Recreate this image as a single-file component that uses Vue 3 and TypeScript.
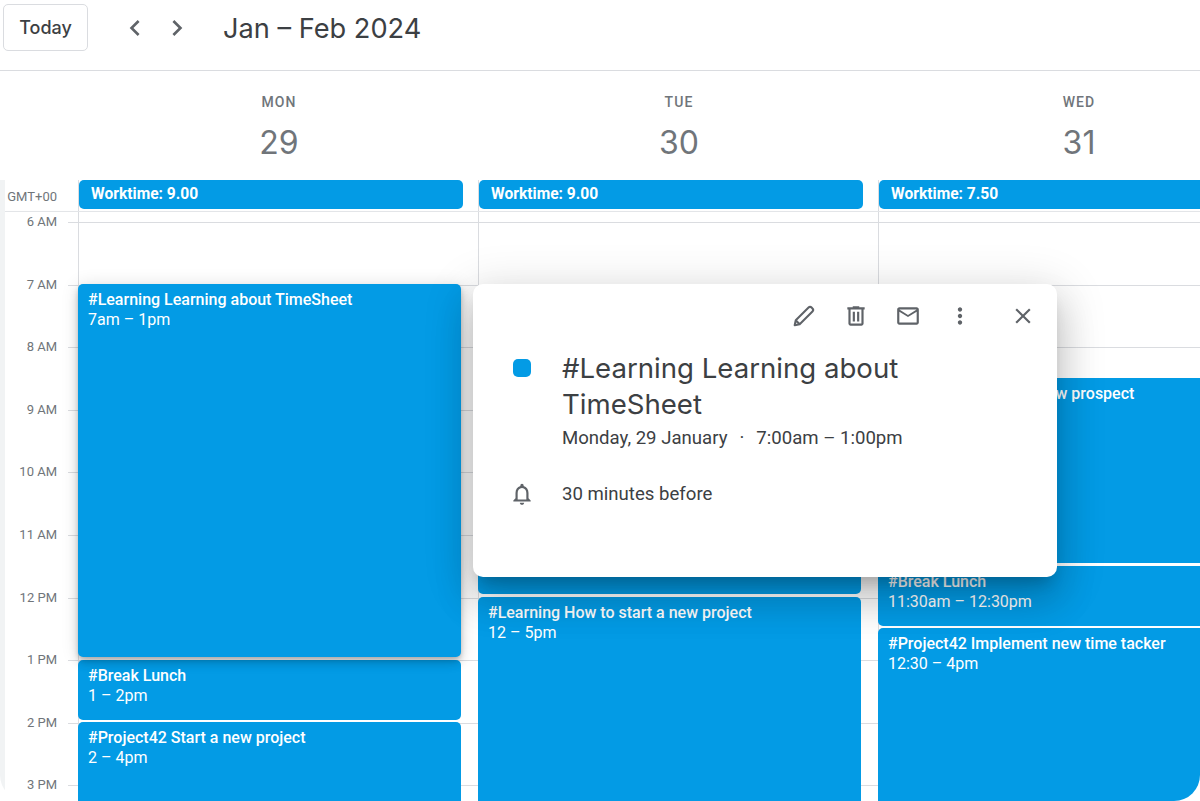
<script setup lang="ts">
interface CalEvent { title: string; time: string; top: number; height: number }
interface Day { name: string; num: number; work: string; events: CalEvent[]; }

const hourH = 62.6
const hours = ['6 AM','7 AM','8 AM','9 AM','10 AM','11 AM','12 PM','1 PM','2 PM','3 PM']
const y = (h: number) => (h - 6) * hourH + 10 - 0.6
const ev = (title: string, time: string, from: number, to: number): CalEvent => ({
  title, time, top: y(from), height: (to - from) * hourH - 2.6,
})
const days: Day[] = [
  { name: 'MON', num: 29, work: 'Worktime: 9.00', events: [
    ev('#Break Lunch', '1 – 2pm', 13, 14),
    ev('#Project42 Start a new project', '2 – 4pm', 14, 16),
  ] },
  { name: 'TUE', num: 30, work: 'Worktime: 9.00', events: [
    ev('', '', 9, 12),
    ev('#Learning How to start a new project', '12 – 5pm', 12, 17),
  ] },
  { name: 'WED', num: 31, work: 'Worktime: 7.50', events: [
    ev('#Project42 Meet the new prospect', '8:30 – 11:30am', 8.5, 11.5),
    ev('#Break Lunch', '11:30am – 12:30pm', 11.5, 12.5),
    ev('#Project42 Implement new time tacker', '12:30 – 4pm', 12.5, 16),
  ] },
]
const selected = ev('#Learning Learning about TimeSheet', '7am – 1pm', 7, 13)
const px = (n: number) => `${n}px`
</script>

<template>
  <div class="page">
    <header class="toolbar">
      <button class="today">Today</button>
      <div class="nav">
        <svg viewBox="0 0 24 24" class="chev"><path d="M15.41 7.41L14 6l-6 6 6 6 1.41-1.41L10.83 12z"/></svg>
        <svg viewBox="0 0 24 24" class="chev"><path d="M8.59 16.59L10 18l6-6-6-6-1.41 1.41L13.17 12z"/></svg>
      </div>
      <h1 class="range">Jan – Feb 2024</h1>
    </header>

    <section class="day-head">
      <div v-for="d in days" :key="d.name" class="day-title">
        <div class="dow">{{ d.name }}</div>
        <div class="num">{{ d.num }}</div>
      </div>
    </section>

    <section class="allday">
      <div class="gmt">GMT+00</div>
      <div v-for="d in days" :key="d.name" class="allday-cell">
        <div class="chip">{{ d.work }}</div>
      </div>
    </section>

    <section class="grid">
      <div class="gutter">
        <div v-for="h in hours" :key="h" class="hour-label"><span>{{ h }}</span></div>
      </div>
      <div v-for="(d, i) in days" :key="d.name" class="col">
        <div v-if="i === 0" class="event raised" :style="{ top: px(selected.top), height: px(selected.height) }">
          <div class="ev-title">{{ selected.title }}</div>
          <div class="ev-time">{{ selected.time }}</div>
        </div>
        <div v-for="e in d.events" :key="e.top" class="event" :style="{ top: px(e.top), height: px(e.height) }">
          <div class="ev-title">{{ e.title }}</div>
          <div class="ev-time">{{ e.time }}</div>
        </div>
      </div>
    </section>

    <aside class="popup">
      <div class="actions">
        <svg viewBox="0 0 24 24" class="ico"><path class="pencil" d="M3.4 20.6l1-4.6L16.2 4.2c.8-.8 2-.8 2.8 0l.8.8c.8.8.8 2 0 2.8L8 19.6zM4.4 16l3.6 3.6"/></svg>
        <svg viewBox="0 0 24 24" class="ico"><path d="M15 4V3H9v1H4v2h1v13c0 1.1.9 2 2 2h10c1.1 0 2-.9 2-2V6h1V4h-5zm2 15H7V6h10v13zM9 8h2v9H9zm4 0h2v9h-2z"/></svg>
        <svg viewBox="0 0 24 24" class="ico"><path d="M20 4H4c-1.1 0-2 .9-2 2v12c0 1.1.9 2 2 2h16c1.1 0 2-.9 2-2V6c0-1.1-.9-2-2-2zm0 14H4V8l8 5 8-5v10zm-8-7L4 6h16l-8 5z"/></svg>
        <svg viewBox="0 0 24 24" class="ico"><path d="M12 8c1.1 0 2-.9 2-2s-.9-2-2-2-2 .9-2 2 .9 2 2 2zm0 2c-1.1 0-2 .9-2 2s.9 2 2 2 2-.9 2-2-.9-2-2-2zm0 6c-1.1 0-2 .9-2 2s.9 2 2 2 2-.9 2-2-.9-2-2-2z"/></svg>
        <svg viewBox="0 0 24 24" class="ico close"><path d="M19 6.41L17.59 5 12 10.59 6.41 5 5 6.41 10.59 12 5 17.59 6.41 19 12 13.41 17.59 19 19 17.59 13.41 12z"/></svg>
      </div>
      <div class="detail">
        <div class="swatch-cell"><span class="swatch"></span></div>
        <div>
          <h2 class="pop-title">#Learning Learning about TimeSheet</h2>
          <div class="pop-date">Monday, 29 January<span class="dot">·</span>7:00am – 1:00pm</div>
        </div>
      </div>
      <div class="remind">
        <div class="swatch-cell">
          <svg viewBox="0 0 24 24" class="bell"><path d="M12 22c1.1 0 2-.9 2-2h-4c0 1.1.9 2 2 2zm6-6v-5c0-3.07-1.63-5.64-4.5-6.32V4c0-.83-.67-1.5-1.5-1.5s-1.5.67-1.5 1.5v.68C7.64 5.36 6 7.92 6 11v5l-2 2v1h16v-1l-2-2zm-2 1H8v-6c0-2.48 1.51-4.5 4-4.5s4 2.02 4 4.5v6z"/></svg>
        </div>
        <span class="pop-date">30 minutes before</span>
      </div>
    </aside>
  </div>
</template>

<style>
html, body { margin: 0; background: #fff; }
</style>

<style scoped>
.page {
  position: relative;
  width: 1200px;
  height: 801px;
  overflow: hidden;
  font-family: Roboto, "Liberation Sans", sans-serif;
  background: #fff;
  border-radius: 0 0 26px 26px;
}
.toolbar {
  display: flex;
  align-items: center;
  height: 70px;
  padding-left: 3px;
  border-bottom: 1px solid #dadce0;
}
.today {
  width: 85px;
  height: 47px;
  margin-top: -15px;
  background: #fff;
  border: 1px solid #dadce0;
  border-radius: 5px;
  color: #3c4043;
  font: 500 18px Inter, Roboto, sans-serif;
  padding: 0 0 1px;
}
.nav {
  display: flex;
  gap: 10px;
  margin: -14px 0 0 31px;
}
.chev { width: 32px; height: 32px; fill: #5f6368; display: block; }
.range {
  margin: -14px 0 0 30px;
  font: 400 27.2px Inter, "Open Sans", sans-serif;
  color: #3c4043;
}
.day-head {
  display: grid;
  grid-template-columns: repeat(3, 400px);
  padding-left: 79px;
  height: 109px;
  box-sizing: border-box;
}
.day-title { text-align: center; }
.dow {
  margin-top: 22px;
  font-size: 14px;
  line-height: 18px;
  font-weight: 500;
  letter-spacing: 1.1px;
  color: #70757a;
}
.num {
  margin-top: 10px;
  font: 400 32px/44px Inter, sans-serif;
  color: #70757a;
}
.allday {
  display: grid;
  grid-template-columns: 78px repeat(3, 400px);
  height: 32px;
  position: relative;
}
.allday::after {
  content: '';
  position: absolute;
  left: 5px;
  right: 0;
  bottom: 0;
  height: 1px;
  background: #e3e5e8;
  box-shadow: 0 1px 2px rgba(60, 64, 67, 0.08);
}
.gmt {
  box-sizing: border-box;
  border-left: 5px solid #f1f3f4;
  font-size: 13px;
  color: #70757a;
  text-align: right;
  padding: 9px 21px 0 0;
  white-space: nowrap;
}
.allday-cell { border-left: 1px solid #dadce0; padding-right: 15px; }
.chip {
  height: 29px;
  background: #039be5;
  border-radius: 5px;
  color: #fff;
  font-weight: 700;
  font-size: 15.6px;
  line-height: 29px;
  padding-left: 12px;
}
.allday-cell:last-child { padding-right: 0; }
.grid {
  display: grid;
  grid-template-columns: 78px repeat(3, 400px);
  height: 589px;
  background: #fff;
  position: relative;
}
.gutter {
  padding-top: 10px;
  border-left: 5px solid #f1f3f4;
  box-sizing: border-box;
  position: relative;
}
.hour-label {
  height: 62.6px;
  position: relative;
  text-align: right;
  padding-right: 21px;
  font-size: 13px;
  color: #70757a;
}
.hour-label::after {
  content: '';
  position: absolute;
  right: 0;
  top: 0;
  width: 10px;
  height: 1px;
  background: #dadce0;
}
.hour-label span { display: inline-block; transform: translateY(-52%); }
.col {
  position: relative;
  border-left: 1px solid #dadce0;
  background-image: repeating-linear-gradient(to bottom, #dadce0 0, #dadce0 1px, transparent 1px, transparent 62.6px);
  background-position: 0 10px;
  background-repeat: no-repeat;
}
.event {
  position: absolute;
  left: -1px;
  width: 383px;
  box-sizing: border-box;
  background: #039be5;
  border-radius: 5px;
  color: #fff;
  padding: 6px 10px 5px;
  font-size: 16px;
  line-height: 20px;
  overflow: hidden;
  white-space: nowrap;
}
.col:last-child .event { width: 340px; }
.raised {
  z-index: 2;
  box-shadow: 0 6px 10px rgba(0, 0, 0, 0.14), 0 1px 18px rgba(0, 0, 0, 0.12), 0 3px 5px -1px rgba(0, 0, 0, 0.2);
}
.ev-title { font-weight: 500; }
.popup {
  position: absolute;
  left: 473px;
  top: 284px;
  width: 584px;
  height: 293px;
  box-sizing: border-box;
  background: #fff;
  border-radius: 10px;
  z-index: 5;
  box-shadow: 0 24px 38px 3px rgba(0, 0, 0, 0.14), 0 9px 46px 8px rgba(0, 0, 0, 0.12), 0 11px 15px -7px rgba(0, 0, 0, 0.2);
  color: #3c4043;
}
.actions {
  display: flex;
  justify-content: flex-end;
  align-items: center;
  gap: 26px;
  height: 26px;
  padding: 19px 21px 0 0;
}
.ico { width: 26px; height: 26px; fill: #5f6368; display: block; }
.pencil { fill: none; stroke: #5f6368; stroke-width: 1.9; stroke-linejoin: round; }
.close { margin-left: 11px; }
.detail {
  display: grid;
  grid-template-columns: 89px 1fr;
  margin-top: 21px;
}
.swatch-cell { padding-left: 40px; }
.swatch {
  display: block;
  width: 18px;
  height: 18px;
  margin-top: 9px;
  background: #039be5;
  border-radius: 5px;
}
.pop-title {
  margin: 0;
  font: 400 27.6px/36px Inter, sans-serif;
  width: 420px;
  color: #3c4043;
}
.pop-date {
  font-size: 18.6px;
  line-height: 24px;
  margin-top: 4px;
  color: #3c4043;
}
.dot { margin: 0 12px; }
.remind {
  display: grid;
  grid-template-columns: 89px 1fr;
  align-items: center;
  margin-top: 31px;
}
.remind .pop-date { margin-top: 0; }
.bell { width: 26px; height: 26px; fill: #5f6368; display: block; margin-left: -4px; }
</style>
